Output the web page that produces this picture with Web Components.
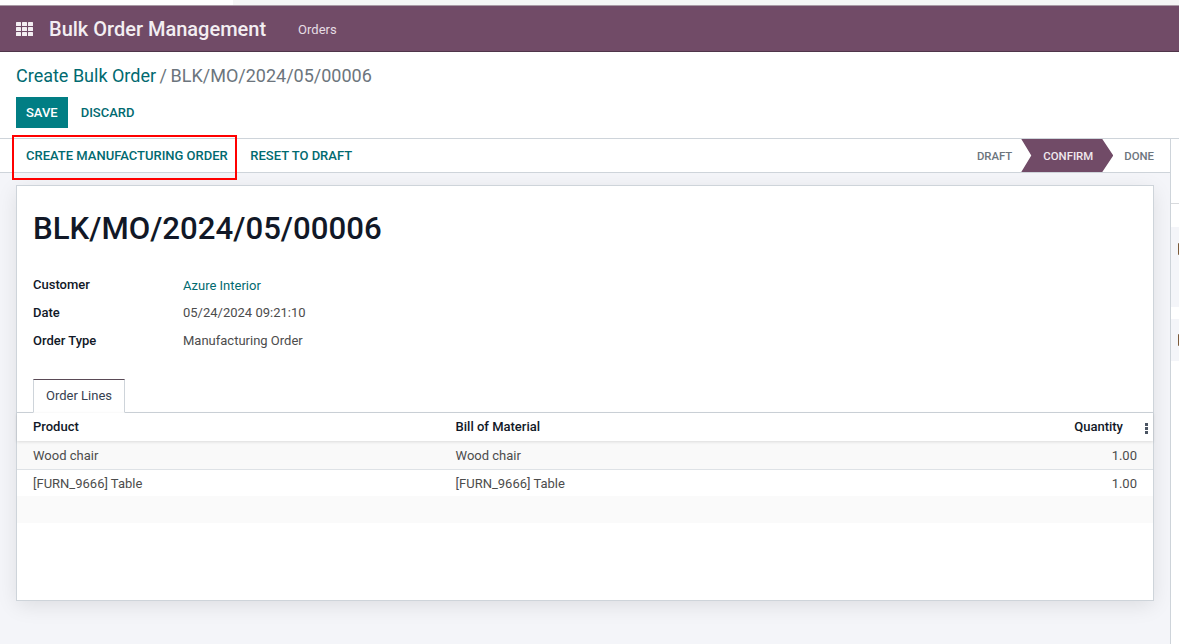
<!DOCTYPE html>
<html><head><meta charset="utf-8"><style>
html,body{margin:0;padding:0;height:100%;overflow:hidden;background:#fff}
body{font:13px Roboto,sans-serif;color:#4c4c4c}
</style></head><body>
<erp-app>
  <erp-navbar slot="nav" title-text="Bulk Order Management" menu="Orders"></erp-navbar>
  <erp-statusbar slot="status"></erp-statusbar>
  <erp-sheet slot="sheet">
    <erp-field label="Customer" value="Azure Interior" link></erp-field>
    <erp-field label="Date" value="05/24/2024 09:21:10"></erp-field>
    <erp-field label="Order Type" value="Manufacturing Order"></erp-field>
    <erp-lines slot="lines"></erp-lines>
  </erp-sheet>
</erp-app>
<script>
function def(name,html){customElements.define(name,class extends HTMLElement{
  connectedCallback(){if(this.shadowRoot)return;const r=this.attachShadow({mode:'open'});
  r.innerHTML=typeof html==='function'?html(this):html;}
});}
def('erp-app',`<style>
:host{display:flex;flex-direction:column;height:644px;width:1179px;overflow:hidden;background:#fff}
.top{height:5px;background:linear-gradient(90deg,#fff 233px,#f5f5f5 233px);border-bottom:1px solid #a99aa5;flex:none}
.body{flex:1;display:flex;min-height:0}
.main{width:1170px;flex:none;border-right:1px solid #ced4da;background:#f4f5f9;display:flex;flex-direction:column;min-height:0}
.chatter{flex:1;background:#fff;display:flex;flex-direction:column;min-width:0}
.c1{height:64px;border-bottom:1px solid #d8dadd;flex:none}
.c2{margin-top:23px;height:80px;background:#f4f5f9;flex:none;overflow:hidden;display:flex;align-items:flex-start}
.c3{margin-top:12px;height:42px;background:#f4f5f9;flex:none;overflow:hidden;display:flex;align-items:flex-start}
.dot{width:2px;height:12px;margin-left:7px;margin-top:16px;background:#7b5a3a;border-radius:2px 0 0 2px}
.c3 .dot{margin-top:15px}
.sheetwrap{padding:12px 16px 0 16px;flex:1;min-height:0}
.head{height:87px;flex:none;background:#fff;width:1179px;box-sizing:border-box;border-bottom:1px solid #ced4da}
</style>
<div class="top"></div>
<slot name="nav"></slot>
<div class="head"><erp-title></erp-title></div>
<div class="body">
  <div class="main">
    <slot name="status"></slot>
    <div class="sheetwrap"><slot name="sheet"></slot></div>
  </div>
  <div class="chatter"><div class="c1"></div><div class="c2"><div class="dot"></div></div><div class="c3"><div class="dot"></div></div></div>
</div>`);
def('erp-navbar',t=>`<style>
:host{display:flex;align-items:center;height:46px;box-sizing:border-box;border-bottom:1px solid #4f3549;background:#714b67;color:#fff;flex:none}
svg{margin-left:16px;flex:none}
.b{font-size:20px;font-weight:500;margin-left:16px;color:#f3eef2;line-height:46px}
.m{font-size:13px;margin-left:32px;margin-top:1px;color:#e6dde4}
</style><svg width="17" height="14" viewBox="0 0 17 14" fill="#f3eef2">
<rect x="0" y="0" width="5" height="4" rx=".5"/><rect x="6" y="0" width="5" height="4" rx=".5"/><rect x="12" y="0" width="5" height="4" rx=".5"/>
<rect x="0" y="5" width="5" height="4" rx=".5"/><rect x="6" y="5" width="5" height="4" rx=".5"/><rect x="12" y="5" width="5" height="4" rx=".5"/>
<rect x="0" y="10" width="5" height="4" rx=".5"/><rect x="6" y="10" width="5" height="4" rx=".5"/><rect x="12" y="10" width="5" height="4" rx=".5"/></svg>
<span class="b">${t.getAttribute('title-text')}</span><span class="m">${t.getAttribute('menu')}</span>`);
def('erp-title',`<style>
:host{display:block;padding:12px 16px 0}
.c{font-size:18px;line-height:24px;color:#016a70;height:24px;display:flex}
.c i{font-style:normal;color:#6c757d;margin-left:3.5px}
.c span{color:#6c757d;margin-left:3.5px}
.btns{display:flex;margin-top:9px;height:31px;align-items:stretch}
.s{background:#017e84;color:#fff;font-size:13px;font-weight:500;padding:0 10px;display:flex;align-items:center}
.d{color:#016a70;font-size:13px;font-weight:500;padding:0 13px;display:flex;align-items:center}
</style><div class="c">Create Bulk Order<i>/</i><span>BLK/MO/2024/05/00006</span></div>
<div class="btns"><div class="s">SAVE</div><div class="d">DISCARD</div></div>`);
def('erp-statusbar',`<style>
:host{display:flex;height:33px;background:#fff;border-bottom:1px solid #ced4da;flex:none;justify-content:space-between;position:relative}
.l{display:flex;align-items:center;padding-left:26px;gap:22.5px;color:#016a70;font-weight:500;font-size:13px}
.r{display:flex;align-items:stretch;font-size:11.375px;font-weight:500;color:#6c757d;padding-right:16px}
.st{display:flex;align-items:center}
.dr{margin-right:9px}
.cf{width:92px;height:33px;padding-left:2px;background:#714b67;color:#f0e9ee;display:flex;align-items:center;justify-content:center;clip-path:polygon(0 0,81px 0,92px 50%,81px 100%,0 100%,10px 50%);box-sizing:border-box}
.dn{margin-left:11px}
.box{position:absolute;left:12px;top:-4px;width:225px;height:45px;box-sizing:border-box;border:2px solid #f00;pointer-events:none}
</style><div class="l"><span>CREATE MANUFACTURING ORDER</span><span>RESET TO DRAFT</span></div>
<div class="r"><div class="st dr">DRAFT</div><div class="cf">CONFIRM</div><div class="st dn">DONE</div></div><div class="box"></div>`);
def('erp-sheet',`<style>
:host{display:block;height:416px;background:#fff;border:1px solid #ced4da;box-sizing:border-box;box-shadow:0 5px 20px -1px rgba(0,0,0,.1)}
h1{margin:0;font-size:31.2px;font-weight:500;color:#111827;line-height:42px;padding:22px 16px 0}
.g{padding:20px 16px 0;display:flex;flex-direction:column}
.lw{margin-top:25px}
</style><h1>BLK/MO/2024/05/00006</h1><div class="g"><slot></slot></div><div class="lw"><slot name="lines"></slot></div>`);
def('erp-field',t=>`<style>
:host{display:grid;grid-template-columns:150px 1fr;height:28px;align-items:center;font-size:13px}
b{font-weight:500;color:#111827}
.l{color:#016a70;margin-top:2px}
</style><b>${t.getAttribute('label')}</b><span class="${t.hasAttribute('link')?'l':''}">${t.getAttribute('value')}</span>`);
def('erp-lines',`<style>
:host{display:block;font-size:13px}
.tabs{height:33px;padding-left:16px;border-bottom:1px solid #ced4da;display:flex}
.tab{border:1px solid #ced4da;border-top-color:#5a4a56;border-bottom:1px solid #fff;padding:0 12px;line-height:31px;color:#374151;background:#fff;margin-bottom:-1px;height:32px}
.row{display:grid;grid-template-columns:422.6px 1fr 80px;padding-left:16px;padding-right:16px;align-items:center;box-sizing:border-box}
.h{height:28px;padding-bottom:2px;font-weight:500;color:#111827;box-shadow:0 1px 3px rgba(0,0,0,.12);position:relative}
.q{text-align:right}
.h .q{margin-right:14px}
.a{height:29px;background:#f9f9f9;border-bottom:1px solid #dee2e6}
.b{height:26px;background:#fff}
.e{height:27px;background:#fafafa}
.k{position:absolute;right:5px;top:10px;width:3px;height:11px}
</style><div class="tabs"><div class="tab">Order Lines</div></div>
<div class="row h"><span>Product</span><span>Bill of Material</span><span class="q">Quantity</span>
<svg class="k" viewBox="0 0 3 11" fill="#4b5563"><rect width="3" height="3"/><rect y="4" width="3" height="3"/><rect y="8" width="3" height="3"/></svg></div>
<div class="row a"><span>Wood chair</span><span>Wood chair</span><span class="q">1.00</span></div>
<div class="row b"><span>[FURN_9666] Table</span><span>[FURN_9666] Table</span><span class="q">1.00</span></div>
<div class="e"></div>`);
</script>
</body></html>
